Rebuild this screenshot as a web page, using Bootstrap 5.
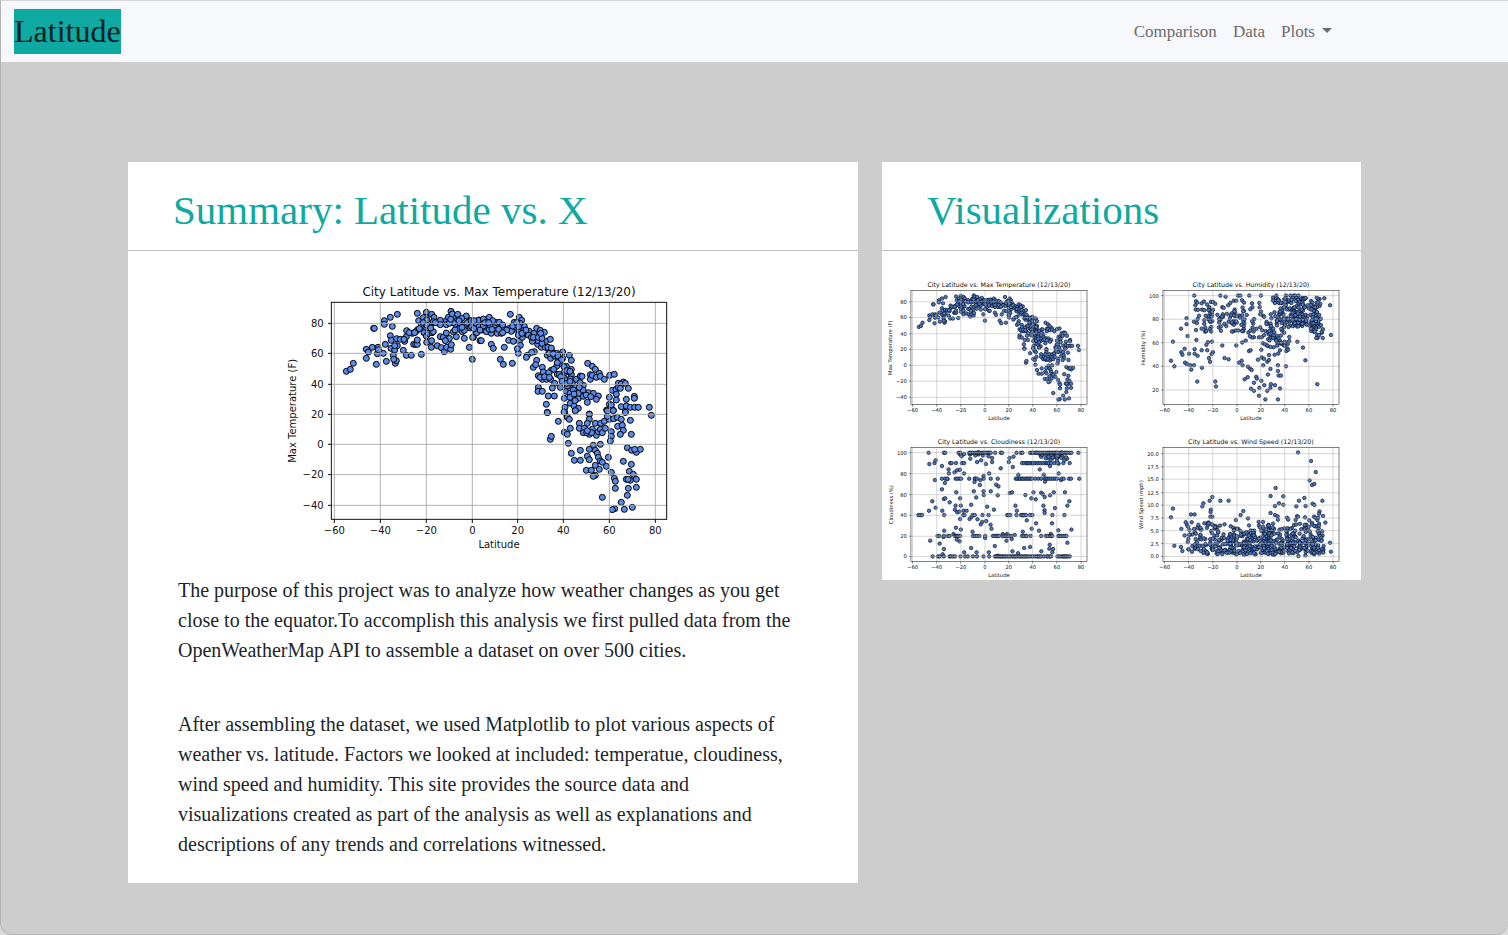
<!DOCTYPE html>
<html lang="en">
<head>
<meta charset="utf-8">
<meta name="viewport" content="width=device-width, initial-scale=1">
<title>Latitude</title>
<link href="https://cdn.jsdelivr.net/npm/bootstrap@5.3.0/dist/css/bootstrap.min.css" rel="stylesheet">
<style>
  html { background: #dcdcdc; }
  body {
    font-family: "Liberation Serif", serif;
    background: transparent;
    color: #212529;
  }
  .site-frame {
    background: #cdcdcd;
    border: 1px solid #b4b4b4;
    border-top-color: #d6d6da;
    border-right: 0;
    border-radius: 0 0 12px 12px;
    overflow: hidden;
  }
  .site-nav { background: #f7f8fb; padding: 8px 168px 8px 13px; }
  .site-nav .navbar-brand {
    background: #0ea9a1;
    color: #06201f;
    font-size: 32px;
    line-height: 45px;
    padding: 0;
  }
  .site-nav .nav-link { color: #6c6c6c; font-size: 17px; line-height: 24px; }
  .site-nav .dropdown-toggle::after { margin-left: 7px; vertical-align: 4px; }
  .content-area { width: 83.4%; margin: 100px 0 51px 115px; }
  .col-summary { flex: 0 0 60%; }
  .col-visual { flex: 0 0 40%; }
  .panel { background: #fff; }
  .panel-title {
    color: #0ea9a1;
    font-size: 41px;
    line-height: 48px;
    padding: 24px 45px 16px;
    border-bottom: 1px solid #bdbdbd;
  }
  .copy { font-size: 20px; line-height: 30px; padding: 23px 60px 24px 50px; }
  .copy p { margin: 0 0 44px; }
  .copy p:last-child { margin-bottom: 0; }
  .chart { display: block; width: 100%; }
  .chart text { font-family: "DejaVu Sans", sans-serif; fill: #111; }
  .chart circle { fill: #5b8be8; stroke: #000; stroke-width: 3; }
  .thumb circle { fill: #4f79c6; stroke: #0c1524; stroke-width: 4; }
  .hero-chart { width: 400px; max-width: 100%; margin: 29px auto 0 152px; }
  .thumbs { display: grid; grid-template-columns: repeat(2, 210px); gap: 14px 42px; padding: 28px 2px 1px; }
  @media (max-width: 1200px) {
    .col-summary, .col-visual { flex: 0 0 100%; }
    .col-visual { margin-top: 24px; }
    .site-nav { padding-right: 13px; }
    .content-area { margin-left: 8%; }
    .hero-chart { margin-left: auto; }
  }
</style>
</head>
<body>
<div class="site-frame min-vh-100">
  <nav class="navbar navbar-expand site-nav">
    <a class="navbar-brand" href="#">Latitude</a>
    <ul class="navbar-nav ms-auto">
      <li class="nav-item"><a class="nav-link" href="#">Comparison</a></li>
      <li class="nav-item"><a class="nav-link" href="#">Data</a></li>
      <li class="nav-item dropdown">
        <a class="nav-link dropdown-toggle" href="#" role="button" data-bs-toggle="dropdown" aria-expanded="false">Plots</a>
        <ul class="dropdown-menu">
          <li><a class="dropdown-item" href="#">Max Temperature</a></li>
          <li><a class="dropdown-item" href="#">Humidity</a></li>
          <li><a class="dropdown-item" href="#">Cloudiness</a></li>
          <li><a class="dropdown-item" href="#">Wind Speed</a></li>
        </ul>
      </li>
    </ul>
  </nav>

  <main class="content-area">
    <div class="row gx-4 align-items-start m-0">
      <section class="col-summary">
        <div class="panel">
          <h1 class="panel-title m-0 fw-normal">Summary: Latitude vs. X</h1>
          <div class="hero-chart"><svg class="chart" data-plot="temp" viewBox="0 0 1200 816"></svg></div>
          <div class="copy">
            <p>The purpose of this project was to analyze how weather changes as you get close to the equator.To accomplish this analysis we first pulled data from the OpenWeatherMap API to assemble a dataset on over 500 cities.</p>
            <p>After assembling the dataset, we used Matplotlib to plot various aspects of weather vs. latitude. Factors we looked at included: temperatue, cloudiness, wind speed and humidity. This site provides the source data and visualizations created as part of the analysis as well as explanations and descriptions of any trends and correlations witnessed.</p>
          </div>
        </div>
      </section>
      <section class="col-visual">
        <div class="panel">
          <h2 class="panel-title m-0 fw-normal">Visualizations</h2>
          <div class="thumbs">
            <a href="#"><svg class="chart thumb" data-plot="temp" viewBox="0 0 1200 816"></svg></a>
            <a href="#"><svg class="chart thumb" data-plot="humidity" viewBox="0 0 1200 816"></svg></a>
            <a href="#"><svg class="chart thumb" data-plot="clouds" viewBox="0 0 1200 816"></svg></a>
            <a href="#"><svg class="chart thumb" data-plot="wind" viewBox="0 0 1200 816"></svg></a>
          </div>
        </div>
      </section>
    </div>
  </main>
</div>

<script>
// Plot area shared by all charts, in viewBox units.
const AREA = { x: 154, y: 67, w: 1006, h: 651 };

const parse = s => s.trim().split(/\s+/).map(p => p.split(',').map(Number));
const shift = (pts, dx, dy) => pts.map(([x, y]) => [x + dx, y + dy]);
// Rescales points measured inside another frame to the shared plot area.
const fit = (pts, f) => pts.map(([x, y]) => [
  AREA.x + (x - f[0]) * AREA.w / (f[2] - f[0]),
  AREA.y + (y - f[1]) * AREA.h / (f[3] - f[1])
]);
let seed = 7;
const rnd = () => (seed = (seed * 16807) % 2147483647) / 2147483647;
const cloud = (n, x0, x1, y0, y1) => Array.from({ length: n }, () => [x0 + rnd() * (x1 - x0), y0 + rnd() * (y1 - y0)]);
const line = (y, xs) => xs.flatMap(v => {
  if (!Array.isArray(v)) return [[v, y]];
  const out = [];
  for (let x = v[0]; x <= v[1]; x += 3 + rnd() * 4) out.push([x, y]);
  return out;
});

const tempWest = parse(`199,274 211,268 220,250 259,208 265,216 277,202 259,235 294,202 292,221 295,209 289,253 310,220 316,193 319,244 281,145 283,145
313,122 313,133 331,112 352,103 337,139 331,167 334,181 350,176 361,178 333,205 344,210 352,197 344,197 340,226 346,250 349,242 341,238 370,211 374,184
379,170 380,152 379,226 394,226 397,160 388,158 401,193 407,193 412,193 412,180 413,149 407,155 424,223 412,100 416,122 426,143 432,158 436,140 439,97
438,112 430,113 424,134 440,187 439,168 445,160 455,103 462,112 455,130 456,158 448,129 460,155 455,182 454,202 472,197 484,203 493,215 500,202 512,208
514,194 481,121 481,170 490,172 499,159 508,175 496,182 481,134 499,122 499,134 505,112 513,94 517,102 526,115 533,103 532,121 529,139 529,170 535,147
547,155 553,175 559,108 553,135 553,151 568,122 571,144 568,202 577,238 580,172 583,130 586,160 597,120 592,147 600,182 520,155 540,130 545,115 515,125
520,128 508,130 537,122 546,142 460,125 440,120 512,118 525,150 562,128 575,128 590,135 600,150 372,178 404,158 418,146 430,128 441,136 452,144 466,128`);
const tempEast = parse(`8,172 19,132 25,121 20,158 34,182 40,117 36,150 49,142 58,112 49,155 64,160 64,193 70,205 73,136 82,160 79,127 88,127 91,142 94,160
103,202 91,238 100,253 127,250 103,148 118,145 121,103 133,127 148,112 155,121 133,148 124,154 116,181 130,184 148,151 139,141 148,184 145,220 157,172
151,196 163,139 166,160 178,154 187,184 192,160 200,145 210,165 211,151 223,157 203,193 193,215 185,217 172,226 169,232 200,241 190,262 197,254 217,262
227,184 241,178 214,202 226,202 236,209 232,226 242,235 245,214 260,220 278,216 278,235 298,226 304,241 265,237 271,250 260,259 289,259 284,274 304,268
220,276 205,287 217,298 230,298 242,298 244,271 236,278 262,283 268,283 251,268 254,310 205,322 204,334 217,334 235,348 253,348 247,324 271,322 229,373
232,397 283,294 290,300 304,284 301,297 307,309 319,298 331,288 336,289 289,334 301,325 283,355 301,370 316,322 319,337 308,350 325,355 340,316 339,330
340,349 325,340 352,367 355,338 370,340 385,348 379,358 353,250 367,259 376,268 388,280 361,284 361,298 367,286 379,292 391,289 403,298 419,286 433,283
312,378 325,385 316,392 285,382 284,397 291,411 460,306 445,310 454,312 466,310 427,331 438,328 445,322 451,325 475,325 418,352 439,343 439,360 418,373
424,375 410,390 430,391 454,380 469,358 466,397 469,378 481,382 493,349 493,355 494,382 505,382 538,382 544,406 358,402 5,140 12,146 28,140 40,138 58,148
68,122 60,135 98,135 110,150 160,152 145,165 142,206 175,165 150,130 184,172 204,182 216,190 238,220 254,228 270,225 282,260 296,276 272,290 296,312 330,308
300,340 315,362 328,322 348,345 362,350 292,318 3,122 12,122 30,150 45,128 56,128 66,148 86,148 98,158 128,138 140,128 146,140 156,160 168,150 190,172
205,172 216,175 212,160 234,202 244,204 250,222 264,228 274,240 262,248 290,272 300,274 210,292 224,290 238,292 276,304 290,310 300,304 310,330 300,352 312,342`);
const tempSouth = parse(`232,8 265,34 282,6 292,21 298,28 316,2 358,13 358,28 301,55 283,67 292,73 241,88 244,79 295,100 328,40 328,55 352,40 343,55 340,68
358,73 367,58 376,40 379,76 392,40 385,65 391,58 397,68 403,34 406,55 418,28 412,19 431,26 430,2 466,7 442,22 454,28 443,49 457,46 460,61 451,73 481,31
484,73 424,65 424,79 421,93 412,3 391,103 370,106 304,130 331,121 358,118 313,151 331,151 352,139 358,149 376,121 382,130 385,142 391,153 397,157 415,142
376,166 388,178 349,181 364,181 376,196 370,199 409,169 424,187 433,205 436,214 436,235 397,262 434,296 427,299 454,277 463,298 487,292 472,256 475,235
460,154 484,163 472,113 485,121 499,127 511,118 494,118 478,184 490,193 469,208 481,211 499,208 499,232 350,68 365,68 352,62 474,208`);

const humidity = parse(`192,61 270,61 286,64 323,61 330,61 357,61 392,61 438,61 467,61 480,61 490,61 495,61 505,61 197,78 201,82 195,90 221,79 214,84 230,88
242,80 248,80 237,96 255,86 276,96 280,98 294,90 300,83 310,76 318,76 335,75 341,82 365,84 387,83 388,96 366,96 337,97 360,102 392,109 398,122 341,108
313,103 315,113 196,103 203,104 215,103 222,105 236,104 248,104 239,115 245,118 206,122 202,132 169,129 169,147 191,140 200,144 222,135 237,126 246,138
243,156 222,146 225,158 214,161 197,165 152,161 172,183 198,195 128,200 163,222 153,232 156,240 176,237 193,237 202,243 193,223 214,226 231,226 233,202
245,200 228,210 248,232 244,238 236,250 239,261 215,279 201,321 255,321 257,336 122,258 132,275 164,264 170,268 180,272 191,272 183,285 276,212 283,250
295,254 318,212 326,264 334,258 337,272 343,314 352,308 353,276 359,282 364,286 378,307 380,312 371,325 362,343 371,349 387,340 393,319 402,332 386,364
405,375 443,375 422,329 434,332 420,340 411,349 449,342 413,300 420,283 443,289 443,272 467,275 399,272 445,303 452,303 383,255 394,248 401,252 411,261
416,256 416,241 356,229 361,226 393,225 433,240 444,236 449,226 468,229 430,217 441,207 460,211 501,201 525,257 518,218 561,329 602,180 599,90 582,69
577,189 562,189 371,187 386,187 394,187 346,197 336,203 398,205 404,208 421,187 437,187`);
const wind = parse(`503,66 542,92 556,125 538,150 545,164 552,161 436,173 421,197 459,198 522,203 506,211 576,211 498,228 526,227 434,227 446,219 459,223
547,220 552,224 421,248 434,254 442,258 568,243 578,257 585,277 599,337 602,364 128,235 122,261 132,346 153,296 163,315 152,350 156,362 246,200 238,211
270,211 295,211 219,219 216,228 242,238 241,245 182,252 193,252 246,259 240,259 166,276 184,276 170,283 177,299 317,269 331,254 339,242 353,264 356,285
385,275 398,275 386,286 470,262 474,268 500,258 503,259 496,269 524,261 551,259 555,262 566,250 545,278 504,377 525,375 269,286 283,282 301,288 309,292
255,287 443,268 428,280 537,270 561,269 563,262`);
const clouds = parse(`142,101 158,98 161,90 180,107 200,117 201,129 218,126 226,120 234,118 234,72 247,71 239,78 247,129 159,149 180,177 189,158 197,146
151,213 141,241 161,232 145,331 173,340 186,206 190,204 181,241 203,216 187,301 185,320 186,356 182,372 223,186 235,204 221,226 237,226 219,238 226,246
232,244 245,241 254,241 235,266 222,292 237,298 215,311 233,333 225,328 268,223 283,201 276,183 279,145 305,183 306,194 316,229 327,183 336,238 295,149
294,164 278,155 305,137 322,129 343,163 350,168 348,195 384,188 391,186 410,133 393,110 357,114 312,101 331,95 263,266 269,260 287,267 297,282 301,275
313,272 326,283 329,295 272,304 310,323 339,347 268,353 284,366 321,366 348,376 374,331 390,326 363,311 376,311 399,314 401,226 405,241 435,270 431,194
449,204 455,186 462,207 478,187 483,191 485,226 488,240 489,248 463,279 450,295 472,301 423,304 511,279 505,195 516,186 550,186 563,213 557,226 520,233
569,298 530,300 507,311 557,337 504,343 427,353 445,350 479,363 503,355 514,356 531,129 486,133 474,117 490,154 505,107 531,100 564,98 519,71 548,90 507,88
383,83 395,79 381,95 331,83 298,90 286,95 265,85 556,85 553,81 526,92 512,366 409,369 392,363 247,366 489,200 538,149 497,80 502,75`);

const frameH = [98, 46, 626, 391], frameC = [87, 52, 616, 394], frameW = [98, 52, 626, 394];
const PLOTS = {
  temp: {
    title: 'Max Temperature', label: 'Max Temperature (F)', labelX: 40,
    ticks: [['80', 130], ['60', 220], ['40', 313], ['20', 403], ['0', 493], ['−20', 584], ['−40', 676]],
    pts: [...tempWest, ...shift(tempEast, 570, 0), ...shift(tempSouth, 570, 390)]
  },
  humidity: {
    title: 'Humidity', label: 'Humidity (%)', labelX: 43,
    ticks: [['100', 95], ['80', 230], ['60', 364], ['40', 499], ['20', 634]],
    pts: fit([...humidity, ...cloud(62, 225, 350, 104, 175), ...cloud(26, 350, 430, 115, 190), ...cloud(100, 428, 522, 66, 140), ...cloud(65, 515, 570, 66, 160),
      ...cloud(40, 430, 530, 130, 155), ...cloud(40, 410, 478, 150, 225), ...cloud(24, 540, 578, 130, 190)], frameH)
  },
  clouds: {
    title: 'Cloudiness', label: 'Cloudiness (%)', labelX: 43,
    ticks: [['100', 95], ['80', 215], ['60', 335], ['40', 453], ['20', 573], ['0', 689]],
    pts: fit([...clouds, ...cloud(26, 475, 545, 66, 84), ...cloud(10, 260, 335, 66, 80),
      ...line(67, [140, 186, 190, 230, 236, [262, 330], 340, 357, 361, 404, 417, 422, [445, 545], [548, 575], 590]),
      ...line(98, [205, 209, 222, 240, 247, [421, 512], 518, 527, 545]),
      ...line(145, [180, 190, 196, [221, 241], 262, 280, 285, 305, 327, 348, [402, 450], 460, 470, 478, [490, 532], 540, 546, 562, 568, 593]),
      ...line(254, [[109, 122], 187, 245, 248, 272, 279, 302, 320, [376, 388], 404, [418, 434], 445, 452, 512, 548]),
      ...line(317, [167, 172, 186, 198, 203, [219, 240], [273, 296], 310, [333, 352], [362, 390], [421, 436], 446, 478, [492, 512], [530, 556]]),
      ...line(378, [152, 168, 173, 186, [203, 222], 236, 250, 258, 273, 285, 305, 322, [340, 380], [382, 480], 486, [495, 512], [527, 567]])], frameC)
  },
  wind: {
    title: 'Wind Speed', label: 'Wind Speed (mph)', labelX: 31,
    ticks: [['20.0', 101], ['17.5', 176], ['15.0', 247], ['12.5', 324], ['10.0', 395], ['7.5', 469], ['5.0', 541], ['2.5', 615], ['0.0', 689]],
    pts: fit([...wind, ...cloud(24, 170, 206, 280, 370), ...cloud(55, 208, 262, 275, 372), ...cloud(95, 262, 360, 295, 374),
      ...cloud(70, 355, 430, 300, 374), ...cloud(110, 385, 490, 282, 370), ...cloud(110, 480, 580, 280, 374), ...cloud(50, 250, 570, 335, 372)], frameW)
  }
};
const LATS = [['−60', 163], ['−40', 301], ['−20', 439], ['0', 577], ['20', 713], ['40', 850], ['60', 988], ['80', 1126]];

document.querySelectorAll('svg[data-plot]').forEach(svg => {
  const p = PLOTS[svg.dataset.plot], a = AREA, b = a.y + a.h;
  const mid = a.x + a.w / 2, my = a.y + a.h / 2;
  const r = svg.classList.contains('thumb') ? 10 : 9;
  let s = p.pts.map(([x, y]) => `<circle cx="${x.toFixed(0)}" cy="${y.toFixed(0)}" r="${r}"/>`).join('');
  s += `<g stroke="#a8a8a8" stroke-opacity=".9" stroke-width="3">`
    + LATS.map(([, x]) => `<path d="M${x} ${a.y}V${b}"/>`).join('')
    + p.ticks.map(([, y]) => `<path d="M${a.x} ${y}H${a.x + a.w}"/>`).join('') + `</g>`;
  s += `<g stroke="#111" stroke-width="3" fill="none"><rect x="${a.x}" y="${a.y}" width="${a.w}" height="${a.h}"/>`
    + LATS.map(([, x]) => `<path d="M${x} ${b}v11"/>`).join('')
    + p.ticks.map(([, y]) => `<path d="M${a.x} ${y}h-10"/>`).join('') + `</g>`;
  s += `<g font-size="30">` + LATS.map(([t, x]) => `<text x="${x}" y="${b + 43}" text-anchor="middle">${t}</text>`).join('')
    + p.ticks.map(([t, y]) => `<text x="${a.x - 23}" y="${y + 11}" text-anchor="end">${t}</text>`).join('')
    + `<text x="${mid}" y="${b + 85}" text-anchor="middle">Latitude</text>`
    + `<text transform="translate(${p.labelX + 8} ${my}) rotate(-90)" text-anchor="middle">${p.label}</text></g>`
    + `<text x="${mid}" y="48" font-size="36" text-anchor="middle">City Latitude vs. ${p.title} (12/13/20)</text>`;
  svg.innerHTML = s;
});
</script>
<script src="https://cdn.jsdelivr.net/npm/bootstrap@5.3.0/dist/js/bootstrap.bundle.min.js"></script>
</body>
</html>
